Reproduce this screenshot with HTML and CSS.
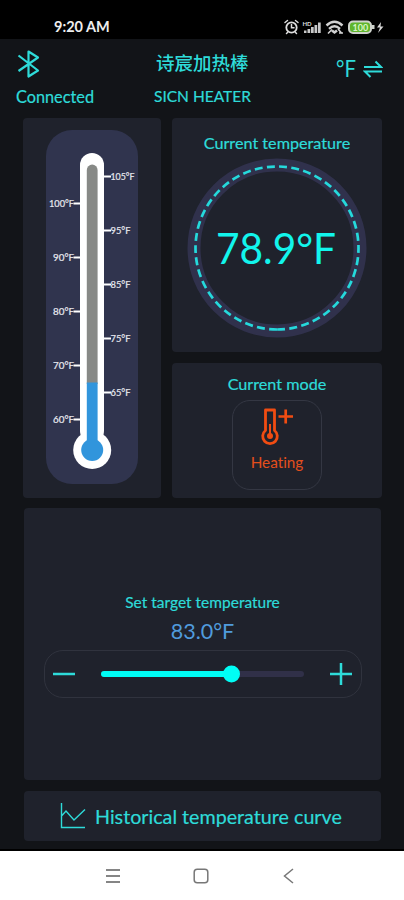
FILE: index.html
```html
<!DOCTYPE html>
<html lang="en">
<head>
<meta charset="utf-8">
<meta name="viewport" content="width=device-width">
<title>SICN HEATER</title>
<link rel="stylesheet" href="styles.css">
</head>
<body>
<div class="statusbar">
  <span class="clock">9:20 AM</span>
  <svg class="status-icons" width="104" height="18" viewBox="0 0 104 18">
    <g fill="none" stroke="#dedede" stroke-width="1.8" stroke-linecap="round">
      <circle cx="11.500" cy="9.500" r="5.200"/>
      <path d="M5 4.500 7.500 2.500M18 4.500 15.500 2.500M11.500 6.500v3.300h2.500M7.500 14.500 6.500 15.500M15.500 14.500l1 1" stroke-width="1.500"/>
    </g>
    <text class="tiny" x="22.500" y="7.500">HD</text>
    <path fill="#c9c9c9" d="M24 12.500h2.500V15H24zM27.500 11h2.700v4h-2.700zM31 9h2.700v6H31zM34.500 7h2.700v8h-2.700zM38 4.500h2.700V15H38z"/>
    <g fill="none" stroke="#d2d2d2" stroke-width="2.400">
      <path d="M46.500 7.500q8-7.500 16 0M49 10.800q5.500-5 11 0"/>
      <path d="M52 12.500l2.500 2 2.500-2" stroke-width="2.500"/>
      <path d="M48 15.500l4-4M58 11l4 4.500M59 15h4" stroke-width="1.600"/>
    </g>
    <rect x="69" y="3.500" width="22" height="11.500" rx="4" fill="#5fb52c" stroke="#cfd3cc" stroke-width="2"/>
    <rect x="92" y="7" width="2.500" height="4" fill="#cfd3cc"/>
    <text class="battery" x="72.500" y="12.500">100</text>
    <path d="M101 4l-4 5.500h3L98 15l5.500-6.500h-3z" fill="#d8d8d8"/>
  </svg>
</div>

<header class="header">
  <div class="link">
    <svg width="24" height="30" viewBox="0 0 24 30"><path d="M2.500 6.500 22 21.500 12.500 27.500V2.500L22 8.500 2.500 22" fill="none" stroke="#2edbd9" stroke-width="2.200" stroke-linejoin="round"/></svg>
    <span class="label connected">Connected</span>
  </div>
  <div class="device">
    <span class="device-cn">诗宸加热棒</span>
    <span class="label heater">SICN HEATER</span>
  </div>
  <div class="unit">
    <svg width="23" height="36" viewBox="-1 -7 23 36"><text class="unit-text" x="0" y="19.500" textLength="20" lengthAdjust="spacingAndGlyphs">°F</text></svg>
    <svg width="20" height="18" viewBox="0 0 20 18"><path d="M1 7H18L12.500 1.500M19 11.500H2L7.500 17" fill="none" stroke="#2edbd9" stroke-width="2"/></svg>
  </div>
</header>

<main class="main">
  <section class="card thermo-card">
    <svg width="92" height="354" viewBox="46 130 92 354">
      <rect x="46" y="130" width="92" height="354" rx="26" fill="#30344e"/>
      <rect x="80" y="153" width="24" height="290" rx="12" fill="#fff"/>
      <circle cx="92.200" cy="450" r="19" fill="#fff"/>
      <path d="M86.800 384V170a5.200 5.200 0 0 1 10.800 0V384z" fill="#878986"/>
      <path d="M86.800 382.500h10.800V445H86.800z" fill="#3195dc"/>
      <circle cx="92.200" cy="450" r="11" fill="#3195dc"/>
      <path d="M104 176.500h7M104 230.500h7M104 284.500h7M104 338.500h7M104 392.500h7M73.500 203.500h7M73.500 257.500h7M73.500 311.500h7M73.500 365.500h7M73.500 419.500h7" stroke="#fff" stroke-width="1.800"/>
      <g class="scale">
        <text x="110.500" y="180" textLength="24" lengthAdjust="spacingAndGlyphs">105°F</text>
        <text x="110.500" y="234" textLength="20" lengthAdjust="spacingAndGlyphs">95°F</text>
        <text x="110.500" y="288" textLength="20" lengthAdjust="spacingAndGlyphs">85°F</text>
        <text x="110.500" y="342" textLength="20" lengthAdjust="spacingAndGlyphs">75°F</text>
        <text x="110.500" y="396" textLength="20" lengthAdjust="spacingAndGlyphs">65°F</text>
        <text x="49" y="207" textLength="25" lengthAdjust="spacingAndGlyphs">100°F</text>
        <text x="53" y="261" textLength="21" lengthAdjust="spacingAndGlyphs">90°F</text>
        <text x="53" y="315" textLength="21" lengthAdjust="spacingAndGlyphs">80°F</text>
        <text x="53" y="369" textLength="21" lengthAdjust="spacingAndGlyphs">70°F</text>
        <text x="53" y="423" textLength="21" lengthAdjust="spacingAndGlyphs">60°F</text>
      </g>
    </svg>
  </section>

  <section class="card current-card">
    <h2 class="label current-title">Current temperature</h2>
    <svg width="180" height="180" viewBox="-90 -90 180 180">
      <circle r="83" fill="none" stroke="#30314c" stroke-width="13"/>
      <circle r="81.500" fill="none" stroke="#25d9dc" stroke-width="2.700" pathLength="512" stroke-dasharray="8 4.290" transform="rotate(90)"/>
      <text class="reading" x="-61" y="16" textLength="120" lengthAdjust="spacingAndGlyphs">78.9°F</text>
    </svg>
  </section>

  <section class="card mode-card">
    <h2 class="label mode-title">Current mode</h2>
    <div class="mode">
      <svg width="34" height="40" viewBox="0 0 34 40">
        <g fill="none" stroke="#f04c12">
          <path d="M4.500 23.500V3h9v20.500a7.300 7.300 0 1 1-9 0z" stroke-width="2.800" stroke-linejoin="round"/>
          <path d="M9 17v11" stroke-width="2"/>
          <path d="M17.500 9.500h14.500M24.700 2.500v14" stroke-width="2.700"/>
        </g>
        <circle cx="9" cy="29" r="3" fill="#f04c12"/>
      </svg>
      <span class="mode-text">Heating</span>
    </div>
  </section>

  <section class="card target-card">
    <h2 class="label target-title">Set target temperature</h2>
    <div class="target-value">83.0°F</div>
    <div class="slider">
      <svg width="22" height="22" viewBox="0 0 22 22"><path d="M0 11h22" stroke="#2edbd9" stroke-width="2.500"/></svg>
      <svg width="204" height="18" viewBox="0 0 204 18">
        <path d="M4 9h197" stroke="#303048" stroke-width="6" stroke-linecap="round"/>
        <path d="M4 9h127" stroke="#00fdf5" stroke-width="6" stroke-linecap="round"/>
        <circle cx="131.500" cy="9" r="8.500" fill="#00fdf5"/>
      </svg>
      <svg width="22" height="22" viewBox="0 0 22 22"><path d="M0 11h22M11 0v22" stroke="#2edbd9" stroke-width="2.500"/></svg>
    </div>
  </section>

  <section class="card history-card">
    <svg width="26" height="26" viewBox="0 0 26 26"><path d="M1.500 0v24.500H25M1.500 13 6 8l8 9L25 6.500" fill="none" stroke="#2edbd9" stroke-width="1.400"/></svg>
    <span class="label history-text">Historical temperature curve</span>
  </section>
</main>

<nav class="navbar">
  <svg width="16" height="16" viewBox="0 0 16 16"><path d="M1 2h14M1 8h14M1 14h14" stroke="#858585" stroke-width="1.800"/></svg>
  <svg width="16" height="16" viewBox="0 0 16 16"><rect x="1.200" y="1.200" width="13.600" height="13.600" rx="3" fill="none" stroke="#777" stroke-width="1.500"/></svg>
  <svg width="16" height="16" viewBox="0 0 16 16"><path d="M12 1 3.500 8l8.500 7" fill="none" stroke="#777" stroke-width="1.500"/></svg>
</nav>
</body>
</html>
```
FILE: styles.css
```css
* { box-sizing: border-box; }
body {
  margin: 0;
  width: 404px;
  height: 900px;
  overflow: hidden;
  display: flex;
  flex-direction: column;
  background: #121418;
  font-family: Lato, "Noto Sans CJK SC", sans-serif;
  font-variant-ligatures: none;
  color: #2edbd9;
}
svg { display: block; flex: none; }
h2 { margin: 0; }
.label { font-weight: 400; white-space: nowrap; -webkit-text-stroke: 0.2px currentColor; }

.statusbar {
  height: 39px;
  flex: none;
  background: #000;
  display: flex;
  justify-content: space-between;
  align-items: flex-start;
  padding: 18px 20px 0 54px;
}
.clock { color: #eee; font-size: 14.500px; line-height: 18px; font-weight: 700; }
.tiny { font-size: 6px; font-weight: 700; fill: #ddd; }
.battery { font-size: 9px; font-weight: 700; fill: #d9f5c7; }

.header {
  height: 79px;
  flex: none;
  display: grid;
  grid-template-columns: 138px 181px 1fr;
  padding-left: 16px;
}
.link { display: flex; flex-direction: column; padding-top: 10px; }
.connected { font-size: 16.300px; line-height: 20px; margin-top: 8px; }
.device { display: flex; flex-direction: column; padding-top: 12px; }
.device-cn { font-size: 18.500px; line-height: 24px; padding-left: 2px; font-weight: 500; }
.heater { font-size: 15.500px; line-height: 20px; margin-top: 11px; }
.unit { display: flex; align-items: flex-start; gap: 5px; padding-top: 11px; }
.unit-text { font-size: 24px; fill: #2edbd9; }
.unit svg + svg { margin-top: 10px; }

.main {
  height: 731px;
  flex: none;
  display: grid;
  grid-template-columns: 138px 210px;
  grid-template-rows: 234px 135px 272px 50px;
  gap: 11px;
  row-gap: 10.700px;
  padding-left: 23px;
}
.card { background: #1f222c; border-radius: 4px; }
.thermo-card { grid-row: 1 / 3; display: flex; justify-content: center; padding-top: 12px; }
.current-card { display: flex; flex-direction: column; align-items: center; padding-top: 15px; }
.current-title { font-size: 16.200px; line-height: 20px; }
.current-card svg { margin-top: 5px; }
.reading { font-size: 43px; fill: #12f5ec; }
.scale { font-size: 9px; font-weight: 400; fill: #e8e9ef; stroke: #e8e9ef; stroke-width: 0.2px; }
.mode-card { display: flex; flex-direction: column; align-items: center; padding-top: 11px; }
.mode-title { font-size: 16.200px; line-height: 20px; }
.mode {
  margin-top: 6px;
  width: 90px;
  height: 90px;
  border: 1.500px solid #343743;
  border-radius: 18px;
  display: flex;
  flex-direction: column;
  align-items: center;
  padding-top: 6px;
}
.mode-text { font-size: 15.300px; line-height: 20px; margin-top: 5px; color: #e34f1c; }
.mode-card .mode svg { margin-left: 1px; }
.target-card {
  grid-column: 1 / 3;
  margin: 0 1px;
  display: flex;
  flex-direction: column;
  align-items: center;
  padding-top: 84px;
}
.target-title { font-size: 15.500px; line-height: 20px; }
.target-value { font-size: 21.500px; line-height: 26px; margin-top: 6px; color: #509bdc; }
.slider {
  width: 318px;
  height: 48px;
  margin-top: 6px;
  border: 1.500px solid #30333e;
  border-radius: 19px;
  display: flex;
  align-items: center;
  justify-content: space-between;
  padding: 0 9px 0 8px;
}
.history-card {
  grid-column: 1 / 3;
  margin: 0 1px;
  display: flex;
  align-items: center;
  gap: 9px;
  padding-left: 36px;
}
.history-text { font-size: 19.700px; line-height: 28px; padding-top: 2px; }

.navbar {
  height: 51px;
  flex: none;
  background: #fff;
  border-top: 2px solid #000;
  display: flex;
  align-items: center;
  justify-content: center;
  gap: 72px;
  padding-right: 2px;
}
```
